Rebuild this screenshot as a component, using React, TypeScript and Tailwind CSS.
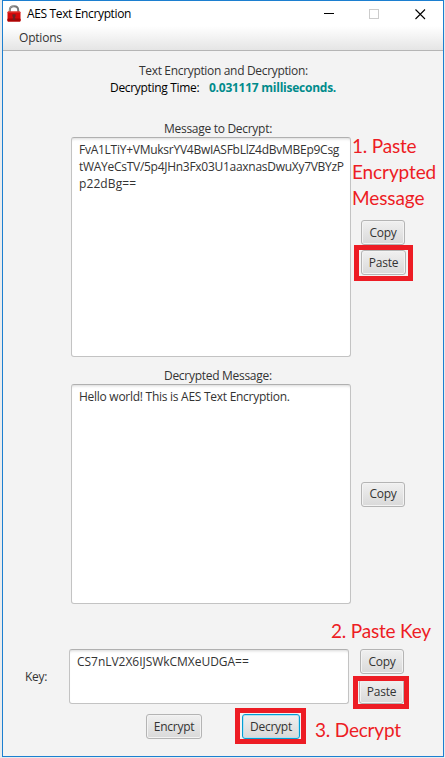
import React from "react";

const btn =
  "flex h-[25px] shrink-0 items-center justify-center rounded-[3px] border border-[#b4b4b4] bg-linear-to-b from-[#f0f0f0] to-[#d9d9d9] shadow-[inset_0_0_0_1px_#f3f3f3] text-[12px] tracking-[-0.25px] text-[#333] whitespace-nowrap";
const area =
  "block shrink-0 overflow-hidden rounded-[3px] border border-[#c3c3c3] border-t-[#b0b0b0] bg-white shadow-[inset_0_3px_3px_-2px_#d8d8d8] px-[7px] pt-[3px] text-[12px] leading-[17px] text-[#333] whitespace-pre";
const note =
  "absolute whitespace-pre font-['Lato',sans-serif] text-[19px] leading-[26px] tracking-[-0.2px] text-[#ed1c24]";
const frame = "absolute border-[5px] border-[#ed1c24]";

function LockIcon() {
  return (
    <svg width="14" height="17" viewBox="0 0 14 17" className="shrink-0">
      <path d="M2.8 9V5C2.8 2.8 4.6 1.3 7 1.3s4.2 1.5 4.2 3.7V9" fill="none" stroke="#777" strokeWidth="2" />
      <path d="M2.6 8V4.8C2.6 2.6 4.5 1 7 1" fill="none" stroke="#aaa" strokeWidth="0.7" />
      <rect x="0.5" y="6.5" width="13" height="10" rx="0.7" fill="#d50a0a" />
      <rect x="0.5" y="13.5" width="13" height="3" rx="0.7" fill="#a80505" />
      <path d="M1 7h12" stroke="#e84a3e" />
      <path d="M5.4 9.2h3.2v2l-.6 1 .6 2.5H5.4l.6-2.5-.6-1z" fill="#6b2525" />
    </svg>
  );
}

export default function App() {
  return (
    <div className="h-[758px] w-[445px] overflow-hidden bg-[#e9ebed] pl-[2px] font-['Open_Sans','Noto_Sans',sans-serif]">
      <div className="relative flex h-[757px] w-[442px] flex-col border border-[#1c7fd0] bg-[#f3f3f3]">
        <header className="flex h-[25px] shrink-0 items-center bg-white pl-[4px]">
          <LockIcon />
          <span className="ml-[6px] text-[12px] tracking-[-0.36px] text-black">AES Text Encryption</span>
          <div className="ml-auto flex items-center pr-[17px]">
            <svg width="102" height="12" viewBox="0 0 102 12" fill="none">
              <path d="M0 5.5h10" stroke="#000" />
              <rect x="45.5" y="1.5" width="9" height="9" stroke="#ccc" />
              <path d="M91.5 1.5l9.5 9.5M101 1.5l-9.5 9.5" stroke="#000" strokeWidth="1.1" />
            </svg>
          </div>
        </header>
        <nav className="flex h-[25px] shrink-0 items-center border-b border-[#b5b5b5] bg-linear-to-b from-white to-[#e5e5e5] pl-4 text-[12px] tracking-[-0.2px] text-[#333]">
          Options
        </nav>

        <div className="mt-[11px] h-[17px] shrink-0 pl-[136px] text-[12px] leading-[17px] text-[#333] whitespace-nowrap">
          <span className="tracking-[-0.33px]">Text Encryption and Decryption:</span>
        </div>
        <div className="flex h-[17px] shrink-0 pl-[107px] text-[12px] leading-[17px] whitespace-nowrap">
          <span className="w-[99px] tracking-[-0.32px] text-black">Decrypting Time:</span>
          <span className="font-bold tracking-[-0.25px] text-[#008b8b]">0.031117 milliseconds.</span>
        </div>

        <div className="mt-[24px] h-[17px] shrink-0 pl-[161px] text-[12px] leading-[17px] text-[#333] whitespace-nowrap">
          <span className="tracking-[-0.29px]">Message to Decrypt:</span>
        </div>
        <div className="flex h-[220px] shrink-0 pl-[68px]">
          <div className={`${area} h-[220px] w-[280px]`}>
            <div className="tracking-[-0.26px]">FvA1LTiY+VMuksrYV4BwIASFbLlZ4dBvMBEp9Csg</div>
            <div className="tracking-[-0.28px]">tWAYeCsTV/5p4JHn3Fx03U1aaxnasDwuXy7VBYzP</div>
            <div className="tracking-[0.1px]">p22dBg==</div>
          </div>
          <div className="ml-[10px] flex flex-col gap-[5px] pt-[83px]">
            <button className={`${btn} w-[44px]`}>Copy</button>
            <button className={`${btn} w-[45px]`}>Paste</button>
          </div>
        </div>

        <div className="mt-[10px] h-[17px] shrink-0 pl-[161px] text-[12px] leading-[17px] text-[#333] whitespace-nowrap">
          <span className="tracking-[-0.29px]">Decrypted Message:</span>
        </div>
        <div className="flex h-[220px] shrink-0 items-center pl-[68px]">
          <div className={`${area} h-[220px] w-[280px]`}>
            <div className="tracking-[-0.27px]">Hello world! This is AES Text Encryption.</div>
          </div>
          <button className={`${btn} ml-[10px] w-[44px]`}>Copy</button>
        </div>

        <div className="mt-[45px] flex h-[55px] shrink-0 pl-[22px]">
          <span className="w-[44px] self-center text-[12px] tracking-[-0.3px] text-[#333]">Key:</span>
          <div className={`${area} h-[55px] w-[280px]`}>
            <div className="tracking-[-0.03px]">CS7nLV2X6IJSWkCMXeUDGA==</div>
          </div>
          <div className="ml-[11px] flex flex-col gap-[5px]">
            <button className={`${btn} w-[44px]`}>Copy</button>
            <button className={`${btn} -ml-px w-[45px]`}>Paste</button>
          </div>
        </div>
        <div className="mt-[10px] flex h-[25px] shrink-0 pl-[143px]">
          <button className={`${btn} w-[56px]`}>Encrypt</button>
          <button className="ml-[40px] flex h-[25px] w-[58px] items-center justify-center rounded-[3px] border border-[#039ed3] bg-linear-to-b from-[#f0f0f0] to-[#d9d9d9] text-[12px] tracking-[-0.25px] text-[#333] shadow-[inset_0_0_0_1px_#b5e0f0]">
            Decrypt
          </button>
        </div>

        <div className={`${note} left-[349px] top-[132px]`}>
          <div className="tracking-[-0.2px]">1. Paste</div>
          <div className="tracking-[-0.1px]">Encrypted</div>
          <div className="tracking-[-0.1px]">Message</div>
        </div>
        <div className={`${note} left-[328px] top-[617px]`}>2. Paste Key</div>
        <div className={`${note} left-[312px] top-[716px] tracking-[-0.1px]`}>3. Decrypt</div>
        <div className={`${frame} left-[351px] top-[244px] h-[36px] w-[59px]`} />
        <div className={`${frame} left-[350px] top-[675px] h-[33px] w-[56px]`} />
        <div className={`${frame} left-[232px] top-[707px] h-[36px] w-[71px]`} />
      </div>
    </div>
  );
}
